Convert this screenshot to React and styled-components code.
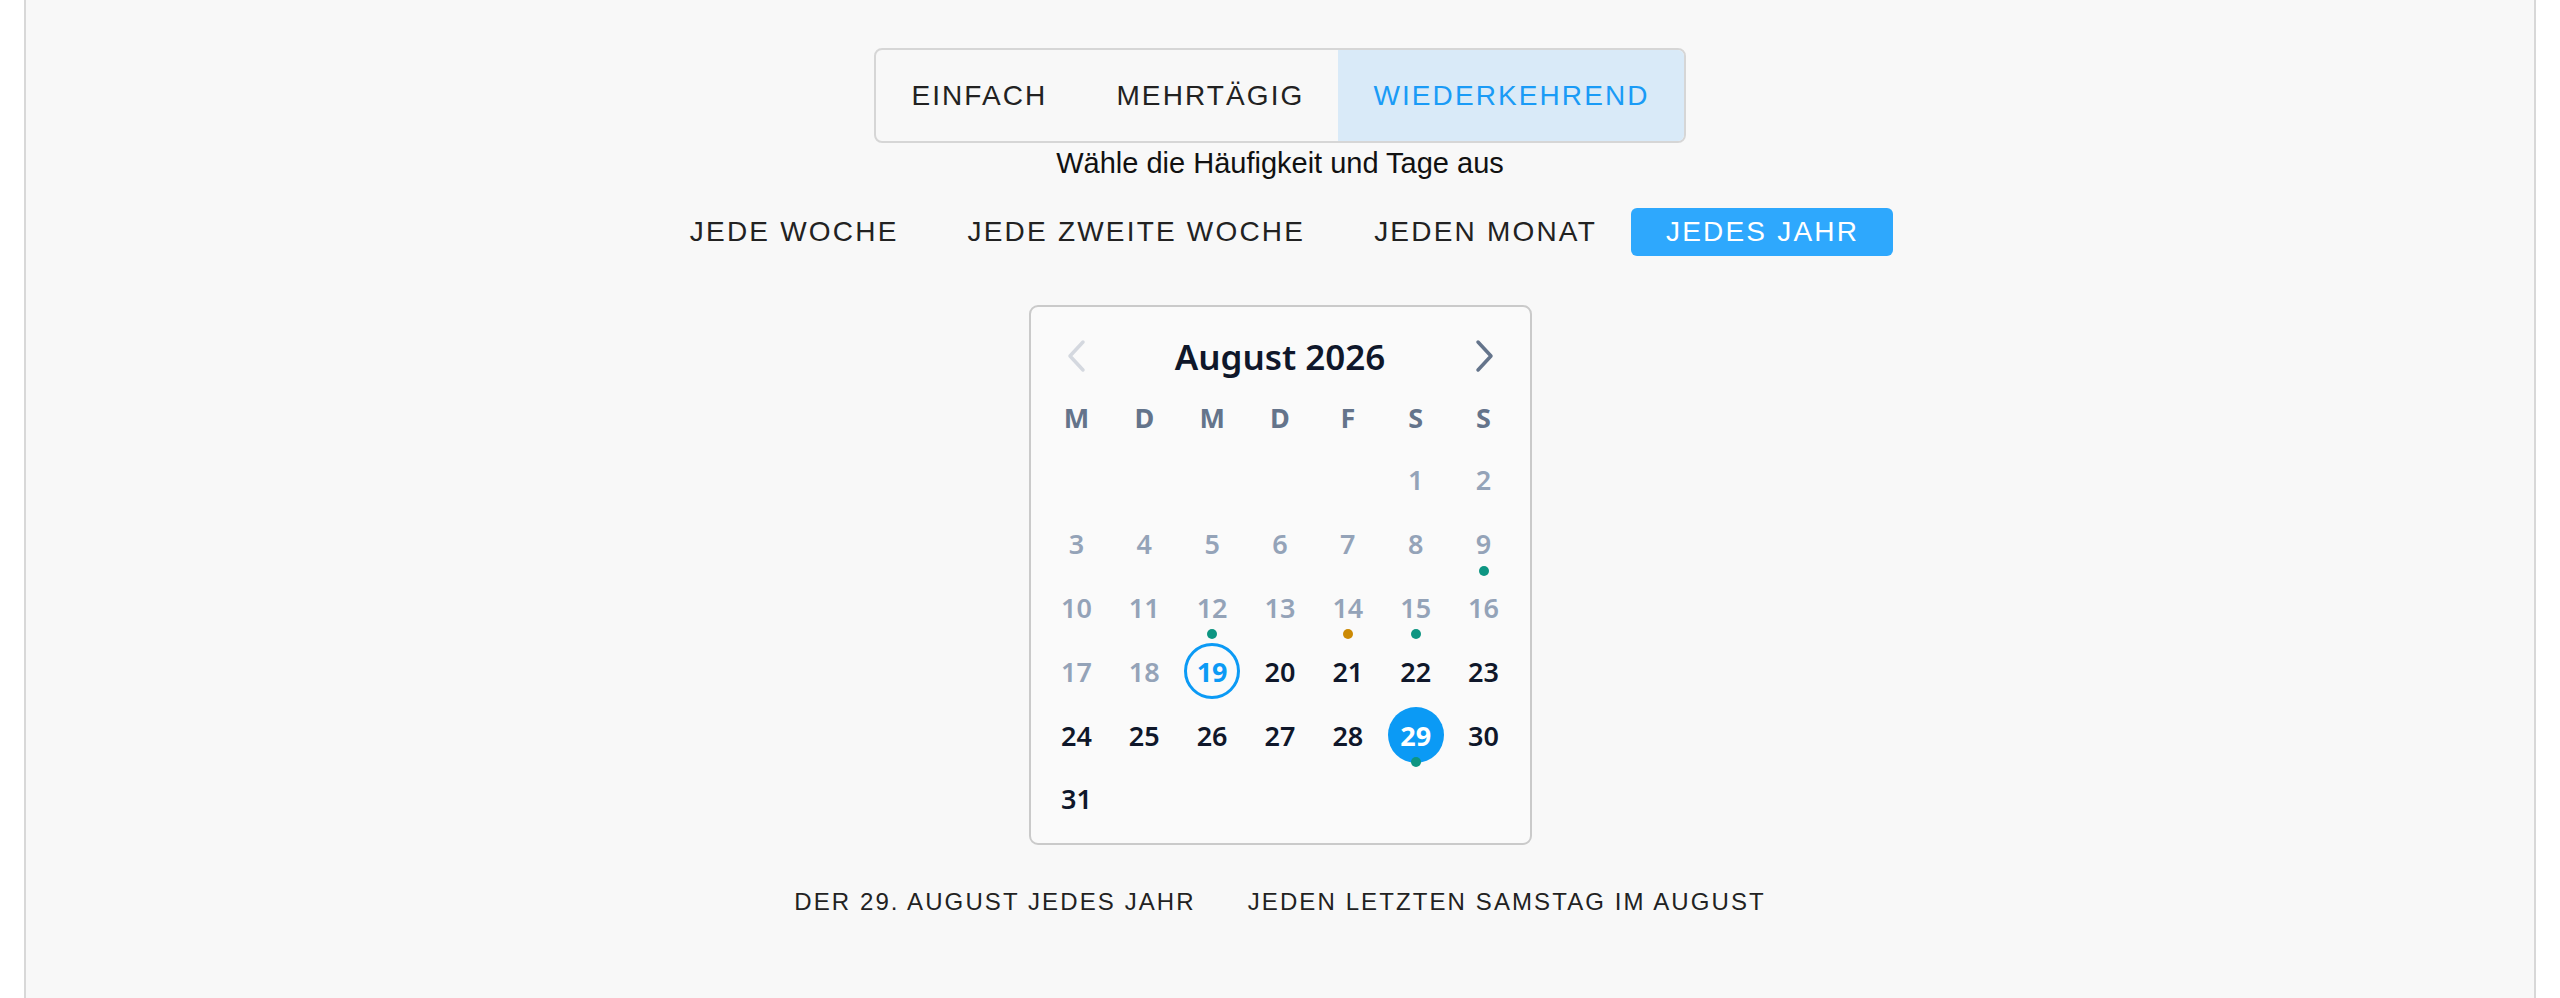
import styled, { createGlobalStyle } from "styled-components";

const GlobalStyle = createGlobalStyle`
  html, body {
    margin: 0;
    padding: 0;
    background: #ffffff;
  }
  #root {
    padding: 0 24px;
  }
`;

const Panel = styled.main`
  min-height: 998px;
  box-sizing: border-box;
  background: #f8f8f8;
  border-left: 2px solid #d8d8d8;
  border-right: 2px solid #d8d8d8;
  padding-top: 48px;
  display: flex;
  flex-direction: column;
  align-items: center;
  font-family: "Liberation Sans", Arial, sans-serif;
`;

const TabGroup = styled.div`
  display: flex;
  height: 95px;
  box-sizing: border-box;
  border: 2px solid #d6d6d6;
  border-radius: 8px;
  overflow: hidden;
`;

const Tab = styled.button`
  border: none;
  margin: 0;
  padding: 0 34px 0 35px;
  font-family: inherit;
  font-size: 28px;
  letter-spacing: 2.1px;
  text-transform: uppercase;
  cursor: pointer;
  background: ${(p) => (p.$active ? "#d9eaf8" : "transparent")};
  color: ${(p) => (p.$active ? "#1a9bf6" : "#222222")};
`;

const Hint = styled.p`
  margin: 4px 0 0;
  font-size: 29px;
  line-height: 32px;
  color: #111111;
`;

const FreqRow = styled.div`
  display: flex;
  margin: 29px 12px 0 0;
`;

const FreqButton = styled.button`
  height: 48px;
  border: none;
  margin: 0;
  padding: 0 34px 0 35px;
  border-radius: 6px;
  font-family: inherit;
  font-size: 28px;
  letter-spacing: 2.2px;
  text-transform: uppercase;
  cursor: pointer;
  background: ${(p) => (p.$active ? "#2ea8fd" : "transparent")};
  color: ${(p) => (p.$active ? "#ffffff" : "#222222")};
`;

const Calendar = styled.section`
  margin-top: 49px;
  width: 503px;
  box-sizing: border-box;
  border: 2px solid #cacaca;
  border-radius: 9px;
  background: #fafafa;
  padding: 19px 12px 12px;
  font-family: "Noto Sans", "Open Sans", sans-serif;
`;

const CalHeader = styled.div`
  display: grid;
  grid-template-columns: 68px 1fr 68px;
  align-items: center;
  height: 60px;
`;

const NavButton = styled.button`
  border: none;
  background: none;
  padding: 0;
  display: flex;
  justify-content: center;
  align-items: center;
  color: ${(p) => (p.$disabled ? "#d4d8df" : "#64748b")};
  cursor: pointer;
`;

const MonthTitle = styled.h2`
  margin: 0;
  text-align: center;
  font-size: 35px;
  font-weight: 600;
  color: #0f172a;
`;

const Grid = styled.div`
  display: grid;
  grid-template-columns: repeat(7, 1fr);
  grid-template-rows: 62px;
  grid-auto-rows: 63.8px;
`;

const WeekDay = styled.div`
  display: flex;
  align-items: center;
  justify-content: center;
  font-size: 27px;
  font-weight: 700;
  color: #64748b;
`;

const DayCell = styled.div`
  position: relative;
  display: flex;
  align-items: center;
  justify-content: center;
`;

const DayNumber = styled.span`
  width: 56px;
  height: 56px;
  box-sizing: border-box;
  border-radius: 50%;
  display: flex;
  align-items: center;
  justify-content: center;
  font-size: 27px;
  font-weight: ${(p) => (p.$today || p.$selected ? 700 : 600)};
  color: ${(p) =>
    p.$selected ? "#ffffff" : p.$today ? "#0b9af5" : p.$past ? "#94a3b8" : "#0f172a"};
  background: ${(p) => (p.$selected ? "#0b9af5" : "transparent")};
  border: ${(p) => (p.$today ? "3px solid #0b9af5" : "none")};
`;

const Dot = styled.span`
  position: absolute;
  left: 50%;
  top: 50%;
  width: 10px;
  height: 10px;
  margin: 22px 0 0 -5px;
  border-radius: 50%;
  background: ${(p) => (p.$tone === "warn" ? "#cc8a04" : "#0d9582")};
`;

const OptionRow = styled.div`
  display: flex;
  margin-top: 35px;
`;

const OptionButton = styled.button`
  height: 44px;
  border: none;
  background: none;
  margin: 0;
  padding: 0 26px;
  font-family: "Liberation Sans", Arial, sans-serif;
  font-size: 24px;
  letter-spacing: 2.1px;
  text-transform: uppercase;
  color: #222222;
  cursor: pointer;
`;

const Chevron = ({ dir }) => (
  <svg width="24" height="34" viewBox="0 0 24 34" fill="none">
    <polyline
      points={dir === "left" ? "18,3 5,17 18,31" : "6,3 19,17 6,31"}
      stroke="currentColor"
      strokeWidth="3.5"
      strokeLinecap="round"
      strokeLinejoin="round"
    />
  </svg>
);

const weekDays = ["M", "D", "M", "D", "F", "S", "S"];
const dots = { 9: "ok", 12: "ok", 14: "warn", 15: "ok", 29: "ok" };
const today = 19;
const selected = 29;
const offset = 5; // 1. August 2026 ist ein Samstag

export default function App() {
  const cells = [];
  for (let i = 0; i < offset; i++) cells.push(null);
  for (let d = 1; d <= 31; d++) cells.push(d);

  return (
    <>
      <GlobalStyle />
      <Panel>
        <TabGroup>
          <Tab>Einfach</Tab>
          <Tab>Mehrtägig</Tab>
          <Tab $active>Wiederkehrend</Tab>
        </TabGroup>
        <Hint>Wähle die Häufigkeit und Tage aus</Hint>
        <FreqRow>
          <FreqButton>Jede Woche</FreqButton>
          <FreqButton>Jede zweite Woche</FreqButton>
          <FreqButton>Jeden Monat</FreqButton>
          <FreqButton $active>Jedes Jahr</FreqButton>
        </FreqRow>

        <Calendar>
          <CalHeader>
            <NavButton $disabled aria-label="Vorheriger Monat">
              <Chevron dir="left" />
            </NavButton>
            <MonthTitle>August 2026</MonthTitle>
            <NavButton aria-label="Nächster Monat">
              <Chevron dir="right" />
            </NavButton>
          </CalHeader>
          <Grid>
            {weekDays.map((w, i) => (
              <WeekDay key={i}>{w}</WeekDay>
            ))}
            {cells.map((d, i) => (
              <DayCell key={i}>
                {d && (
                  <DayNumber
                    $past={d < today}
                    $today={d === today}
                    $selected={d === selected}
                  >
                    {d}
                  </DayNumber>
                )}
                {d && dots[d] && <Dot $tone={dots[d]} />}
              </DayCell>
            ))}
          </Grid>
        </Calendar>

        <OptionRow>
          <OptionButton>Der 29. August jedes Jahr</OptionButton>
          <OptionButton>Jeden letzten Samstag im August</OptionButton>
        </OptionRow>
      </Panel>
    </>
  );
}
